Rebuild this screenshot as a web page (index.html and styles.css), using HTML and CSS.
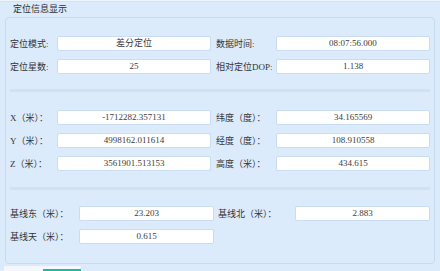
FILE: index.html
```html
<!DOCTYPE html>
<html lang="zh-CN">

<head>
    <meta charset="UTF-8">
    <meta name="viewport" content="width=device-width, initial-scale=1.0">
    <title>定位信息显示</title>
    <link rel="stylesheet" href="styles.css">
</head>

<body>
    <div class="window">
        <div class="title">定位信息显示</div>
        <div class="panel">
            <div class="grid grid-top">
                <label>定位模式:</label>
                <div class="field">差分定位</div>
                <span></span>
                <label>数据时间:</label>
                <div class="field">08:07:56.000</div>

                <label>定位星数:</label>
                <div class="field">25</div>
                <span></span>
                <label>相对定位DOP:</label>
                <div class="field">1.138</div>
            </div>

            <div class="sep sep-1"></div>

            <div class="grid grid-top">
                <label>X（米）：</label>
                <div class="field">-1712282.357131</div>
                <span></span>
                <label>纬度（度）：</label>
                <div class="field">34.165569</div>

                <label>Y（米）：</label>
                <div class="field">4998162.011614</div>
                <span></span>
                <label>经度（度）：</label>
                <div class="field">108.910558</div>

                <label>Z（米）：</label>
                <div class="field">3561901.513153</div>
                <span></span>
                <label>高度（米）：</label>
                <div class="field">434.615</div>
            </div>

            <div class="sep sep-2"></div>

            <div class="grid grid-base">
                <label>基线东（米）：</label>
                <div class="field">23.203</div>
                <span></span>
                <label>基线北（米）：</label>
                <div class="field">2.883</div>

                <label>基线天（米）：</label>
                <div class="field">0.615</div>
            </div>
        </div>

        <div class="tabs">
            <div class="tab"></div>
            <div class="tab active"></div>
        </div>
    </div>
</body>

</html>
```

FILE: styles.css
```css
body {
    margin: 0;
    padding: 0;
    background-color: #dcebfb;
    font-family: 'Liberation Serif', 'Noto Sans CJK SC', serif;
    font-size: 9px;
    color: #333;
    width: 440px;
    height: 271px;
    overflow: hidden;
}

.window {
    border-top: 1px solid #eef5fd;
    box-shadow: inset 0 1px 0 #d2e3f5;
}

.title {
    height: 16px;
    line-height: 16px;
    padding-left: 13px;
    padding-top: 0;
    font-family: 'Noto Sans CJK SC', sans-serif;
    color: #2e2e2e;
}

.panel {
    margin-left: 5px;
    width: 428px;
    height: 245px;
    border: 1px solid #c6dbf0;
    border-radius: 4px;
    padding: 0 4px;
    box-sizing: content-box;
    width: 420px;
    padding-top: 18px;
    height: 227px;
}

.grid {
    display: grid;
    row-gap: 8px;
    align-items: center;
}

.grid-top {
    grid-template-columns: 47px 154px 5px 60px 154px;
}

.grid-base {
    grid-template-columns: 69px 135px 4px 77px 135px;
}

label {
    white-space: nowrap;
    color: #333;
}

.field {
    height: 13px;
    line-height: 13px;
    background-color: #fff;
    border: 1px solid #c8ddf2;
    border-radius: 2px;
    text-align: center;
    color: #3c3c3c;
    white-space: nowrap;
}

.sep {
    height: 3px;
    background-color: #cfe2f5;
}

.sep-1 {
    margin: 15px 0 18px;
}

.sep-2 {
    margin: 16px 0 16px;
}

.tabs {
    display: flex;
    margin-top: 2px;
    padding-left: 4px;
}

.tab {
    width: 39px;
    height: 8px;
    background-color: #f4f8fc;
}

.tab.active {
    width: 38px;
    border-bottom: 2px solid #1fb8a0;
    height: 3px;
    margin-top: 0;
}
```
